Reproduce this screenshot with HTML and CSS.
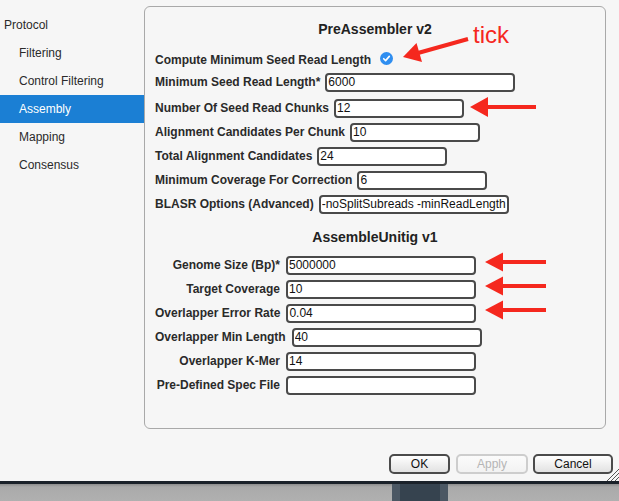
FILE: index.html
```html
<!DOCTYPE html>
<html>
<head>
<meta charset="utf-8">
<link rel="stylesheet" href="styles.css">
</head>
<body>
<div class="app">
  <div class="sidebar">
    <div class="nav-item root">Protocol</div>
    <div class="nav-item">Filtering</div>
    <div class="nav-item">Control Filtering</div>
    <div class="nav-item selected">Assembly</div>
    <div class="nav-item">Mapping</div>
    <div class="nav-item">Consensus</div>
  </div>
  <div class="right">
    <div class="panel">
      <div class="section-title">PreAssembler v2</div>
      <div class="row row-check">
        <span class="label">Compute Minimum Seed Read Length</span>
        <span class="check"><svg width="13" height="13" viewBox="0 0 13 13"><circle cx="6.5" cy="6.5" r="6.5" fill="#2f8ef0"/><path d="M3.7 6.7 L5.6 8.6 L9.3 4.4" fill="none" stroke="#fff" stroke-width="1.6" stroke-linecap="round" stroke-linejoin="round"/></svg></span>
      </div>
      <div class="row"><span class="label">Minimum Seed Read Length*</span><input class="field w190" value="6000"></div>
      <div class="row gap1"><span class="label">Number Of Seed Read Chunks</span><input class="field w130" value="12"></div>
      <div class="row"><span class="label">Alignment Candidates Per Chunk</span><input class="field w130" value="10"></div>
      <div class="row"><span class="label">Total Alignment Candidates</span><input class="field w130" value="24"></div>
      <div class="row"><span class="label">Minimum Coverage For Correction</span><input class="field w130" value="6"></div>
      <div class="row"><span class="label">BLASR Options (Advanced)</span><input class="field w190" value="-noSplitSubreads -minReadLength"></div>

      <div class="section-title second">AssembleUnitig v1</div>
      <div class="rows2">
        <div class="row"><span class="label r">Genome Size (Bp)*</span><input class="field w190 f2" value="5000000"></div>
        <div class="row"><span class="label r">Target Coverage</span><input class="field w190 f2" value="10"></div>
        <div class="row"><span class="label r">Overlapper Error Rate</span><input class="field w190 f2" value="0.04"></div>
        <div class="row"><span class="label r">Overlapper Min Length</span><input class="field w190 f2" value="40"></div>
        <div class="row"><span class="label r">Overlapper K-Mer</span><input class="field w190 f2" value="14"></div>
        <div class="row"><span class="label r">Pre-Defined Spec File</span><input class="field w190 f2" value=""></div>
      </div>
    </div>
    <div class="buttons">
      <div class="btn ok">OK</div>
      <div class="btn apply disabled">Apply</div>
      <div class="btn cancel">Cancel</div>
    </div>
  </div>
  <svg class="grip" width="13" height="13" viewBox="0 0 13 13">
    <path d="M1 13 L13 1 M5 13 L13 5 M9 13 L13 9" stroke="#555" stroke-width="1"/>
  </svg>
</div>
<div class="taskbar">
  <div class="tb-line"></div>
  <div class="tb-body">
    <div class="tb-block"><div class="tb-inner"></div></div>
  </div>
</div>

<div class="note">tick</div>
<svg class="arrows" width="619" height="501" viewBox="0 0 619 501">
  <g fill="#f5281e" stroke="#f5281e">
    <line x1="468" y1="39" x2="418" y2="53" stroke-width="4"/>
    <polygon points="403,57 422,62 416.5,43" stroke="none"/>
    <line x1="536" y1="107" x2="486" y2="107" stroke-width="4"/>
    <polygon points="470,107 488,97 488,117" stroke="none"/>
    <line x1="546" y1="262" x2="500" y2="262" stroke-width="4"/>
    <polygon points="485,262 503,252.5 503,271.5" stroke="none"/>
    <line x1="546" y1="286" x2="500" y2="286" stroke-width="4"/>
    <polygon points="485,286 503,276.5 503,295.5" stroke="none"/>
    <line x1="546" y1="310" x2="500" y2="310" stroke-width="4"/>
    <polygon points="485,310 503,300.5 503,319.5" stroke="none"/>
  </g>
</svg>
</body>
</html>
```

FILE: styles.css
```css
html, body {
  margin: 0;
  padding: 0;
}
body {
  width: 619px;
  height: 501px;
  overflow: hidden;
  background: #f6f6f6;
  font-family: "Liberation Sans", Arial, Helvetica, sans-serif;
  color: #222;
  position: relative;
}
.app {
  height: 481px;
  display: flex;
  position: relative;
}
.sidebar {
  width: 144px;
  flex: none;
  padding-top: 11px;
  box-sizing: border-box;
}
.nav-item {
  height: 28px;
  line-height: 28px;
  font-size: 12px;
  color: #2a2a2a;
  padding-left: 19px;
}
.nav-item.root {
  padding-left: 4px;
}
.nav-item.selected {
  background: #1b7fd4;
  color: #fff;
}
.right {
  flex: 1;
  display: flex;
  flex-direction: column;
  padding-top: 6px;
}
.panel {
  width: 462px;
  height: 423px;
  box-sizing: border-box;
  border: 1px solid #a9a9a9;
  border-radius: 6px;
  padding-top: 12px;
}
.section-title {
  text-align: center;
  font-weight: bold;
  font-size: 14px;
  line-height: 20px;
  height: 20px;
  margin-bottom: 11px;
  color: #222;
}
.section-title.second {
  margin-top: 11px;
  margin-bottom: 6px;
}
.row {
  display: flex;
  align-items: center;
  height: 24px;
  padding-left: 10px;
}
.row-check {
  height: 20px;
}
.row.gap1 {
  margin-top: 2px;
}
.label {
  font-weight: bold;
  font-size: 12px;
  color: #2a2a2a;
  white-space: nowrap;
}
.label.r {
  min-width: 125px;
  text-align: right;
}
.check {
  margin-left: 9px;
  display: flex;
  margin-top: -3px;
}
.field {
  box-sizing: border-box;
  height: 19px;
  border: 2px solid #4a4a4a;
  border-radius: 4px;
  background: #fff;
  font-family: "Liberation Sans", Arial, Helvetica, sans-serif;
  font-size: 12px;
  color: #111;
  padding: 0 1px;
  margin: 0 0 0 5px;
  outline: none;
}
.field.f2 {
  margin-left: 6px;
}
.w130 { width: 130px; }
.w190 { width: 190px; }
.buttons {
  display: flex;
  justify-content: flex-end;
  padding-right: 6px;
  margin-top: 25px;
}
.btn {
  box-sizing: border-box;
  height: 20px;
  line-height: 16px;
  border: 2px solid #4b4b4b;
  border-radius: 5px;
  background: linear-gradient(#ffffff, #f0f0f0 50%, #e2e2e2);
  font-size: 12px;
  text-align: center;
  color: #111;
}
.btn.ok { width: 61px; }
.btn.apply { width: 72px; margin-left: 6px; }
.btn.cancel { width: 80px; margin-left: 5px; }
.btn.disabled {
  border-color: #cdcdcd;
  color: #b5b5b5;
  background: linear-gradient(#fbfbfb, #f2f2f2);
}
.grip {
  position: absolute;
  right: 0;
  bottom: 0;
}
.taskbar {
  height: 20px;
  display: flex;
  flex-direction: column;
}
.tb-line {
  height: 3px;
  background: #1b222a;
}
.tb-body {
  flex: 1;
  background: linear-gradient(#8e8e8e, #aaaaaa 3px, #b0b0b0);
  position: relative;
  display: flex;
}
.tb-block {
  margin-left: 392px;
  width: 56px;
  background: #4b5763;
  display: flex;
  justify-content: center;
}
.tb-inner {
  width: 40px;
  background: #36434f;
}
.note {
  position: absolute;
  left: 473px;
  top: 23px;
  font-size: 24px;
  line-height: 24px;
  color: #f5281e;
  font-family: "Liberation Sans", Arial, Helvetica, sans-serif;
}
.arrows {
  position: absolute;
  left: 0;
  top: 0;
  pointer-events: none;
}
```
